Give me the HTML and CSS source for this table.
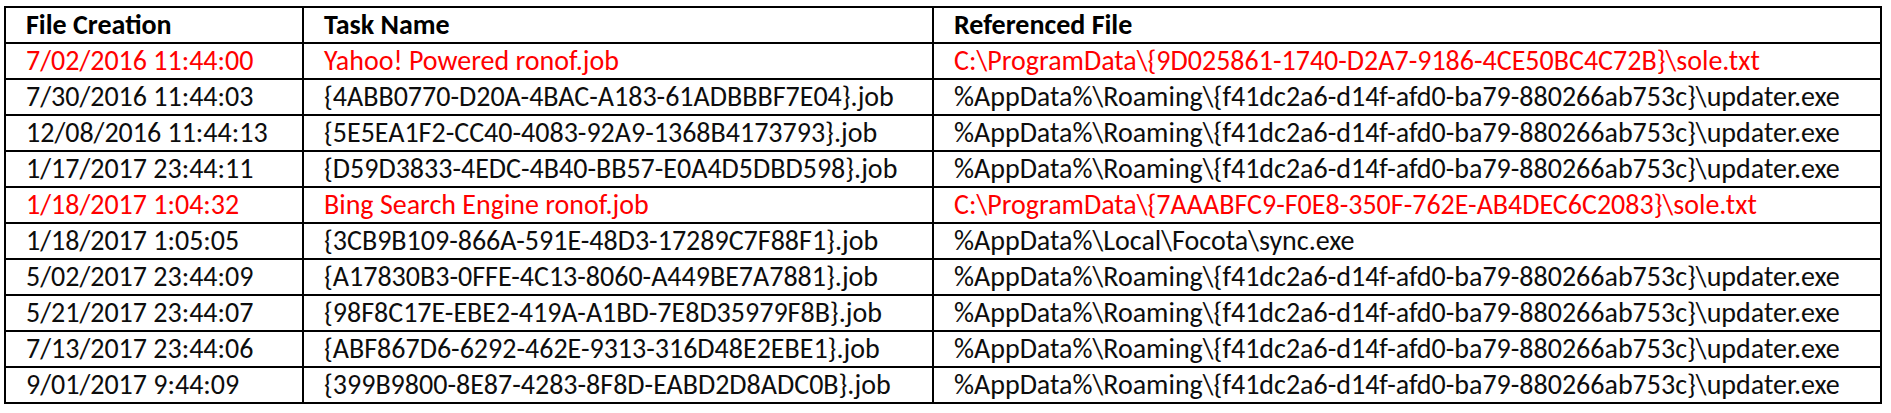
FILE: index.html
```html
<!DOCTYPE html>
<html lang="en">
<head>
<meta charset="utf-8">
<title>Scheduled Tasks</title>
<link rel="stylesheet" href="styles.css">
</head>
<body>
<table class="tasks">
  <colgroup>
    <col class="col-date">
    <col class="col-task">
    <col class="col-file">
  </colgroup>
  <thead>
    <tr class="head-row">
      <th>File Creation</th>
      <th>Task Name</th>
      <th>Referenced File</th>
    </tr>
  </thead>
  <tbody>
    <tr class="flagged">
      <td>7/02/2016 11:44:00</td>
      <td>Yahoo! Powered ronof.job</td>
      <td>C:\ProgramData\{9D025861-1740-D2A7-9186-4CE50BC4C72B}\sole.txt</td>
    </tr>
    <tr>
      <td>7/30/2016 11:44:03</td>
      <td>{4ABB0770-D20A-4BAC-A183-61ADBBBF7E04}.job</td>
      <td>%AppData%\Roaming\{f41dc2a6-d14f-afd0-ba79-880266ab753c}\updater.exe</td>
    </tr>
    <tr>
      <td>12/08/2016 11:44:13</td>
      <td>{5E5EA1F2-CC40-4083-92A9-1368B4173793}.job</td>
      <td>%AppData%\Roaming\{f41dc2a6-d14f-afd0-ba79-880266ab753c}\updater.exe</td>
    </tr>
    <tr>
      <td>1/17/2017 23:44:11</td>
      <td>{D59D3833-4EDC-4B40-BB57-E0A4D5DBD598}.job</td>
      <td>%AppData%\Roaming\{f41dc2a6-d14f-afd0-ba79-880266ab753c}\updater.exe</td>
    </tr>
    <tr class="flagged">
      <td>1/18/2017 1:04:32</td>
      <td>Bing Search Engine ronof.job</td>
      <td>C:\ProgramData\{7AAABFC9-F0E8-350F-762E-AB4DEC6C2083}\sole.txt</td>
    </tr>
    <tr>
      <td>1/18/2017 1:05:05</td>
      <td>{3CB9B109-866A-591E-48D3-17289C7F88F1}.job</td>
      <td>%AppData%\Local\Focota\sync.exe</td>
    </tr>
    <tr>
      <td>5/02/2017 23:44:09</td>
      <td>{A17830B3-0FFE-4C13-8060-A449BE7A7881}.job</td>
      <td>%AppData%\Roaming\{f41dc2a6-d14f-afd0-ba79-880266ab753c}\updater.exe</td>
    </tr>
    <tr>
      <td>5/21/2017 23:44:07</td>
      <td>{98F8C17E-EBE2-419A-A1BD-7E8D35979F8B}.job</td>
      <td>%AppData%\Roaming\{f41dc2a6-d14f-afd0-ba79-880266ab753c}\updater.exe</td>
    </tr>
    <tr>
      <td>7/13/2017 23:44:06</td>
      <td>{ABF867D6-6292-462E-9313-316D48E2EBE1}.job</td>
      <td>%AppData%\Roaming\{f41dc2a6-d14f-afd0-ba79-880266ab753c}\updater.exe</td>
    </tr>
    <tr>
      <td>9/01/2017 9:44:09</td>
      <td>{399B9800-8E87-4283-8F8D-EABD2D8ADC0B}.job</td>
      <td>%AppData%\Roaming\{f41dc2a6-d14f-afd0-ba79-880266ab753c}\updater.exe</td>
    </tr>
  </tbody>
</table>
</body>
</html>
```
FILE: styles.css
```css
html, body {
  background: #ffffff;
}
body {
  margin: 0;
  padding: 6px 0 0 4px;
  font-family: Carlito, Calibri, "Liberation Sans", sans-serif;
  font-size: 28px;
  color: #000000;
}
.tasks {
  border-collapse: separate;
  border-spacing: 0;
  border-top: 2px solid #000;
  border-left: 2px solid #000;
  table-layout: fixed;
  width: 1878px;
}
.col-date { width: 298px; }
.col-task { width: 630px; }
.col-file { width: 948px; }
.tasks th,
.tasks td {
  height: 34px;
  padding: 0 0 0 20px;
  border-right: 2px solid #000;
  border-bottom: 2px solid #000;
  text-align: left;
  vertical-align: middle;
  white-space: nowrap;
  line-height: 34px;
  box-sizing: content-box;
}
.tasks th {
  font-weight: 700;
}
.tasks td {
  font-weight: 400;
  color: #0d0d0d;
}
.tasks .flagged td {
  color: #ff0000;
}
```
